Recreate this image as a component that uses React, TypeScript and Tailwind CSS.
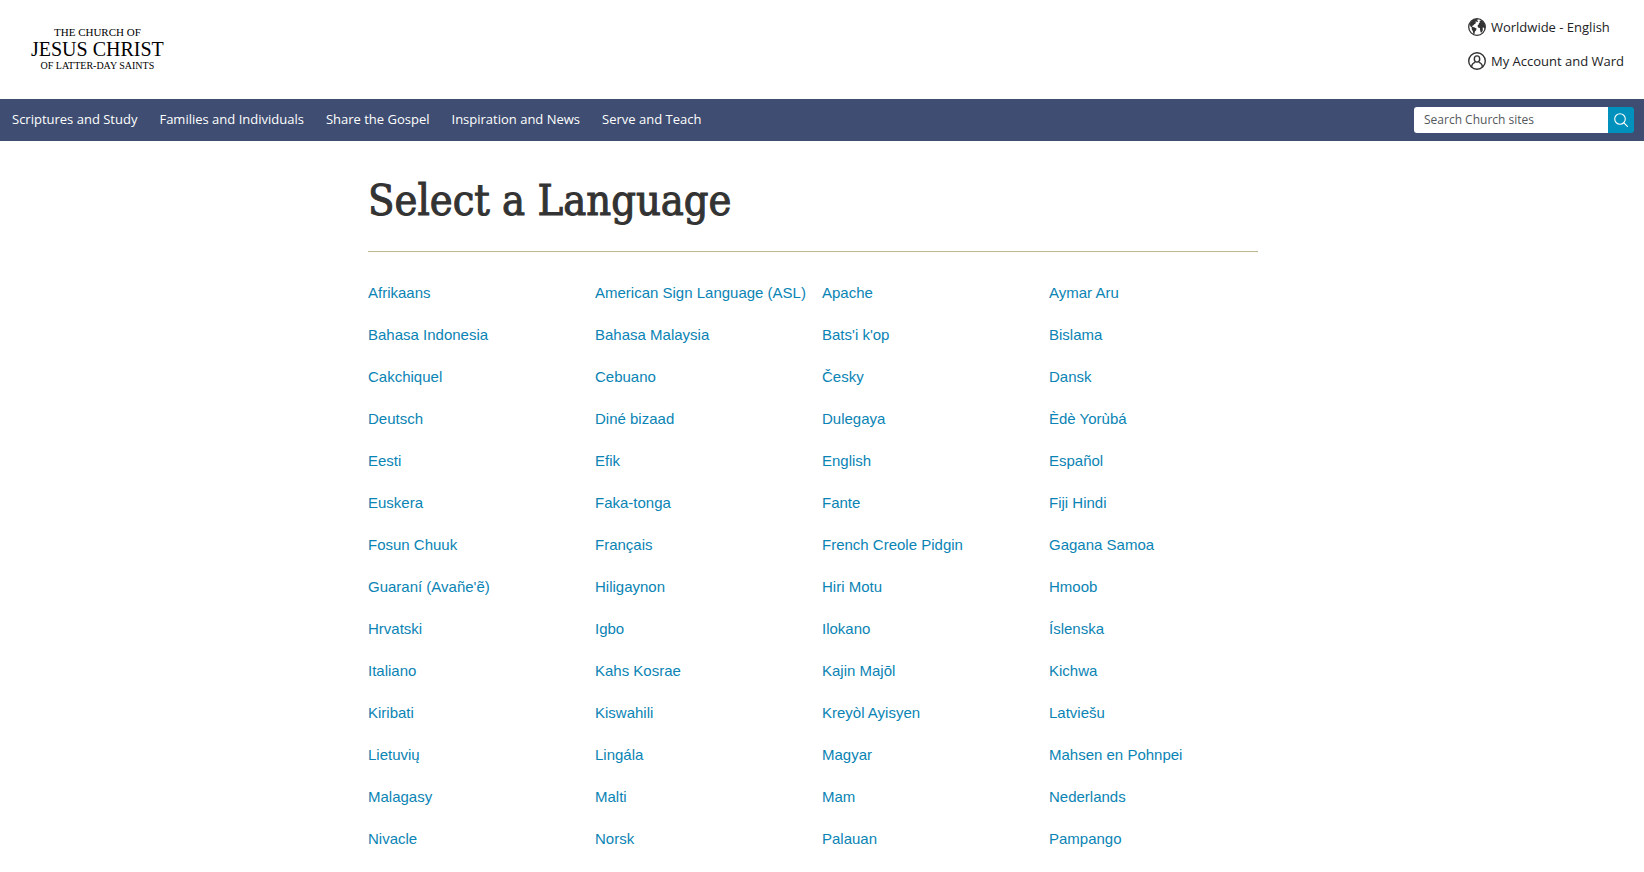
const navLinks = [
  'Scriptures and Study',
  'Families and Individuals',
  'Share the Gospel',
  'Inspiration and News',
  'Serve and Teach',
];

const languages = [
  'Afrikaans', 'American Sign Language (ASL)', 'Apache', 'Aymar Aru',
  'Bahasa Indonesia', 'Bahasa Malaysia', "Bats'i k'op", 'Bislama',
  'Cakchiquel', 'Cebuano', 'Česky', 'Dansk',
  'Deutsch', 'Diné bizaad', 'Dulegaya', 'Èdè Yorùbá',
  'Eesti', 'Efik', 'English', 'Español',
  'Euskera', 'Faka-tonga', 'Fante', 'Fiji Hindi',
  'Fosun Chuuk', 'Français', 'French Creole Pidgin', 'Gagana Samoa',
  "Guaraní (Avañe'ẽ)", 'Hiligaynon', 'Hiri Motu', 'Hmoob',
  'Hrvatski', 'Igbo', 'Ilokano', 'Íslenska',
  'Italiano', 'Kahs Kosrae', 'Kajin Majōl', 'Kichwa',
  'Kiribati', 'Kiswahili', 'Kreyòl Ayisyen', 'Latviešu',
  'Lietuvių', 'Lingála', 'Magyar', 'Mahsen en Pohnpei',
  'Malagasy', 'Malti', 'Mam', 'Nederlands',
  'Nivacle', 'Norsk', 'Palauan', 'Pampango',
];

function GlobeIcon() {
  return (
    <svg viewBox="0 0 18 18" className="size-[18px] shrink-0" aria-hidden="true">
      <circle cx="9" cy="9" r="8.3" fill="white" stroke="#333333" strokeWidth="1.3" />
      <path
        fill="#333333"
        d="M4.2 2.3 7.2.9 10 1.2 9.2 2.4 10.2 3.4 8.8 4.3 8.4 3.2 7.5 3.8 7.9 5.2 6.3 6.2 5.2 7.6 4.1 7.9 4.6 8.9 6.2 9.2 8.5 10.6 8.2 12.2 6.9 13.4 6.4 16.2 5.3 15.8 4.8 12.9 3.7 11.2 3.8 9.6 2.3 8.2 1.7 6 2.6 4.2z"
      />
      <path
        fill="#333333"
        d="M11.4 3 13.6 2.2 16 4.6 17.2 8 16.8 11 15.6 9.4 14.6 9.8 14.9 12 13.8 14.4 12.6 14.2 12 11.6 11.9 10 10 9.4 9.6 7.6 10.8 6.2 11 4.8 12.2 4.4z"
      />
    </svg>
  );
}

function AccountIcon() {
  return (
    <svg viewBox="0 0 18 18" className="size-[18px] shrink-0" fill="none" stroke="#333333" strokeWidth="1.4" aria-hidden="true">
      <circle cx="9" cy="9" r="8.3" />
      <ellipse cx="9" cy="7" rx="2.7" ry="3.1" />
      <path d="M3.6 15.2c0-2.5 1.2-4.1 3.6-4.8M14.4 15.2c0-2.5-1.2-4.1-3.6-4.8" />
    </svg>
  );
}

function SearchIcon() {
  return (
    <svg viewBox="0 0 14 14" className="size-[14px]" fill="none" stroke="white" strokeWidth="1.1" strokeLinecap="round" aria-hidden="true">
      <circle cx="6" cy="6" r="5.3" />
      <path d="M9.9 9.9 13.4 13.4" />
    </svg>
  );
}

function Header() {
  return (
    <header>
      <div className="flex h-[99px] items-start justify-between pl-[31px] pr-5">
        <a
          href="#"
          className="mt-[26px] flex flex-col items-center font-['Liberation_Serif',serif] text-black"
        >
          <span className="text-[11px] leading-[13px]">THE CHURCH OF</span>
          <span className="text-[20px] leading-[20px]">JESUS CHRIST</span>
          <span className="text-[10px] leading-[13px]">OF LATTER-DAY SAINTS</span>
        </a>
        <ul className="mt-[18px] flex flex-col gap-4 text-[13px] leading-[18px] text-[#212225]">
          <li>
            <a href="#" className="flex items-center gap-[5px]">
              <GlobeIcon />
              Worldwide - English
            </a>
          </li>
          <li>
            <a href="#" className="flex items-center gap-[5px]">
              <AccountIcon />
              My Account and Ward
            </a>
          </li>
        </ul>
      </div>

      <nav className="flex h-[42px] items-center justify-between bg-[#3e4d71] pl-3 pr-[10px]">
        <ul className="flex gap-[22px] text-[13px] font-medium text-white">
          {navLinks.map((label) => (
            <li key={label}>
              <a href="#">{label}</a>
            </li>
          ))}
        </ul>
        <form className="flex h-[26px] overflow-hidden rounded-[3px]" role="search">
          <input
            type="search"
            aria-label="Search Church sites"
            placeholder="Search Church sites"
            className="w-[194px] bg-white px-[10px] text-[12px] text-[#53575b] outline-none placeholder:text-[#53575b]"
          />
          <button type="submit" aria-label="Search" className="flex w-[26px] items-center justify-center bg-[#0092bc]">
            <SearchIcon />
          </button>
        </form>
      </nav>
    </header>
  );
}

export default function App() {
  return (
    <div className="bg-white font-['Open_Sans',sans-serif]">
      <Header />
      <main className="mx-auto max-w-[908px] pt-8">
        <div className="mr-[18px] border-b border-[#bdb98c] pb-6">
          <h1 className="font-['DejaVu_Serif_Condensed','DejaVu_Serif',serif] text-[43px] leading-[54px] text-[#333333] [-webkit-text-stroke:1px_#333333]">
            Select a Language
          </h1>
        </div>
        <ul className="mt-[29px] grid grid-cols-4 gap-y-[18px] pb-5 font-['Liberation_Sans',sans-serif] text-[15px] leading-6 text-[#0a84b4]">
          {languages.map((language) => (
            <li key={language}>
              <a href="#" className="whitespace-nowrap">{language}</a>
            </li>
          ))}
        </ul>
      </main>
    </div>
  );
}
